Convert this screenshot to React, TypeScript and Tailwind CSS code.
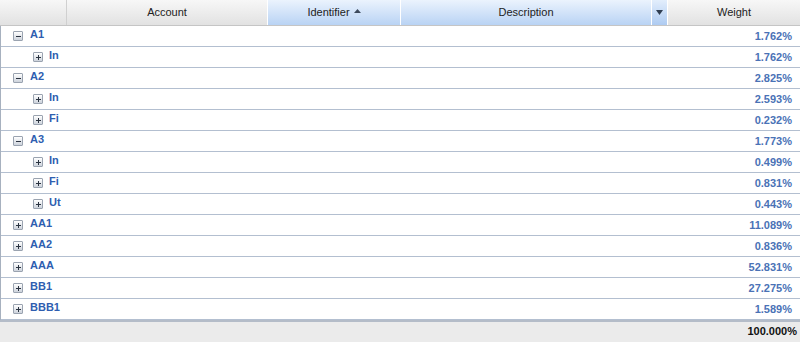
import React from "react";

type Row = { label: string; weight: string; level: number; open?: boolean };

const rows: Row[] = [
  { label: "A1", weight: "1.762%", level: 0, open: true },
  { label: "In", weight: "1.762%", level: 1 },
  { label: "A2", weight: "2.825%", level: 0, open: true },
  { label: "In", weight: "2.593%", level: 1 },
  { label: "Fi", weight: "0.232%", level: 1 },
  { label: "A3", weight: "1.773%", level: 0, open: true },
  { label: "In", weight: "0.499%", level: 1 },
  { label: "Fi", weight: "0.831%", level: 1 },
  { label: "Ut", weight: "0.443%", level: 1 },
  { label: "AA1", weight: "11.089%", level: 0 },
  { label: "AA2", weight: "0.836%", level: 0 },
  { label: "AAA", weight: "52.831%", level: 0 },
  { label: "BB1", weight: "27.275%", level: 0 },
  { label: "BBB1", weight: "1.589%", level: 0 },
];

function ToggleIcon({ open }: { open?: boolean }) {
  return (
    <div className="relative w-[10px] h-[10px] shrink-0 border border-[#9aa3b0] rounded-[1px] bg-gradient-to-b from-[#ffffff] to-[#cdd3dc]">
      <div className="absolute left-[2px] top-[4px] w-[5px] h-[1px] bg-[#2a3340]" />
      {!open && <div className="absolute left-[4px] top-[2px] w-[1px] h-[5px] bg-[#2a3340]" />}
    </div>
  );
}

export default function App() {
  const font = { fontFamily: '"Liberation Sans", Arial, sans-serif' };
  return (
    <div className="w-[800px] h-[342px] overflow-hidden bg-white flex flex-col" style={font}>
      {/* Header */}
      <div className="flex h-[26px] border-b border-[#c5c5c5] text-[11px] text-[#222] shrink-0">
        <div className="w-[67px] bg-gradient-to-b from-[#f7f7f7] to-[#e2e2e2] border-r border-[#d0d0d0]" />
        <div className="w-[201px] flex items-center justify-center bg-gradient-to-b from-[#f7f7f7] to-[#e2e2e2] border-r border-[#ffffff]">
          Account
        </div>
        <div className="w-[133px] flex items-center justify-center gap-1 bg-gradient-to-b from-[#ebf3fd] to-[#b9d3f4] border-r border-[#ffffff]">
          Identifier
          <svg width="7" height="4" viewBox="0 0 7 4" className="-mt-[4px]">
            <path d="M0 4 L3.5 0 L7 4 Z" fill="#3d4a5c" />
          </svg>
        </div>
        <div className="w-[250px] flex items-center justify-center bg-gradient-to-b from-[#ebf3fd] to-[#b9d3f4]">
          Description
        </div>
        <div className="w-[17px] flex items-center justify-center bg-gradient-to-b from-[#e3eefc] to-[#aecbf1] border-l border-r border-[#ffffff]">
          <svg width="7" height="5" viewBox="0 0 7 5">
            <path d="M0 0 L7 0 L3.5 5 Z" fill="#2f3e52" />
          </svg>
        </div>
        <div className="flex-1 flex items-center justify-center bg-gradient-to-b from-[#f7f7f7] to-[#e2e2e2]">
          Weight
        </div>
      </div>

      {/* Body */}
      <div className="flex flex-col border-l border-[#a7b1bf] shrink-0">
        {rows.map((r, i) => (
          <div
            key={i}
            className="flex h-[21px] shrink-0 border-b border-[#b3bfd0] text-[11px] font-bold"
          >
            <div
              className={`flex items-start flex-1 ${r.level === 0 ? "pl-[12px] gap-[7px]" : "pl-[32px] gap-[6px]"}`}
            >
              <div className="pt-[5px]">
                <ToggleIcon open={r.open} />
              </div>
              <div className="pt-[1px] leading-[14px] text-[#2e5eb0]">{r.label}</div>
            </div>
            <div className="pr-[8px] pt-[3px] leading-[14px] text-[#4a72b6]">{r.weight}</div>
          </div>
        ))}
      </div>

      {/* Summary */}
      <div className="flex-1 border-t-2 border-[#b4bcc8] bg-[#ebebeb] flex items-start justify-end pr-[3px] pt-[2px]">
        <span className="text-[11px] font-bold text-[#111] leading-[14px]">100.000%</span>
      </div>
    </div>
  );
}
